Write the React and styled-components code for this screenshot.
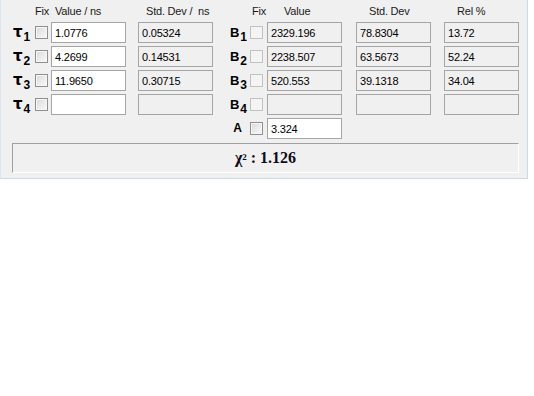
import React from 'react';
import styled, { createGlobalStyle } from 'styled-components';

const GlobalStyle = createGlobalStyle`
  html, body {
    margin: 0;
    padding: 0;
    background: #ffffff;
  }
`;

const S = {
    Panel: styled.div`
    width: 528px;
    box-sizing: border-box;
    background: #f0f0f0;
    border-left: 1px solid #dde6ee;
    border-right: 1px solid #cfd9e2;
    border-bottom: 1px solid #cfd9e2;
    padding: 2px 0 5px 0;
    font-family: "Liberation Sans", Arial, sans-serif;
    font-size: 11px;
    color: #000000;
  `,
    Grid: styled.div`
    display: grid;
    padding-left: 12px;
    grid-template-columns: 22px 16px 75px 12px 75px 37px 17px 75px 14px 75px 13px 75px;
    grid-template-rows: 17px repeat(5, 21px);
    row-gap: 3px;
    align-items: center;
  `,
    Head: styled.div`
    grid-column: ${p => p.$col};
    align-self: end;
    padding-left: ${p => p.$pad || 0}px;
    line-height: 13px;
    margin-bottom: 1px;
    white-space: pre;
    letter-spacing: -0.2px;
    color: #1a1a1a;
  `,
    Tau: styled.div`
    grid-column: 1;
    font-family: "DejaVu Sans", sans-serif;
    font-weight: bold;
    font-size: 15px;
    line-height: 21px;
    white-space: nowrap;
  `,
    Letter: styled.div`
    grid-column: ${p => p.$col};
    justify-self: end;
    padding-right: ${p => p.$gap || 3}px;
    font-family: "Liberation Sans", Arial, sans-serif;
    font-weight: bold;
    font-size: ${p => p.$size || 13}px;
    line-height: 21px;
    white-space: nowrap;
  `,
    Sub: styled.span`
    font-family: "Liberation Sans", Arial, sans-serif;
    font-weight: bold;
    font-size: 12px;
    position: relative;
    top: 4px;
    margin-left: 1px;
  `,
    Check: styled.span`
    grid-column: ${p => p.$col};
    display: block;
    width: 13px;
    height: 13px;
    box-sizing: border-box;
    border: 1px solid ${p => (p.$disabled ? '#c2c2c2' : '#8f8f8f')};
    background: ${p => (p.$disabled
        ? '#f4f4f4'
        : 'linear-gradient(135deg, #d8d8d8 0%, #ececec 55%, #f8f8f8 100%)')};
    box-shadow: ${p => (p.$disabled ? 'none' : 'inset 0 0 0 1px #f6f6f6')};
  `,
    Field: styled.input`
    grid-column: ${p => p.$col};
    width: 75px;
    height: 21px;
    box-sizing: border-box;
    margin: 0;
    padding: 0 0 0 3px;
    border: 1px solid #a5a5a5;
    border-radius: 0;
    background: ${p => (p.readOnly ? '#f0f0f0' : '#ffffff')};
    font-family: "Liberation Sans", Arial, sans-serif;
    font-size: 11px;
    letter-spacing: -0.2px;
    color: #000000;
    outline: none;
  `,
    Chi: styled.div`
    margin: 4px 0 0 11px;
    width: 507px;
    height: 30px;
    box-sizing: border-box;
    border-top: 1px solid #a0a0a0;
    border-left: 1px solid #a0a0a0;
    border-right: 1px solid #ffffff;
    border-bottom: 1px solid #ffffff;
    display: flex;
    align-items: center;
    justify-content: center;
    font-family: "Liberation Serif", "Times New Roman", serif;
    font-weight: bold;
    font-size: 16px;
    color: #0c0c1a;
  `,
    Sup: styled.sup`
    font-size: 9px;
    position: relative;
    top: -1px;
  `
};

const tauRows = [
    { value: '1.0776', dev: '0.05324' },
    { value: '4.2699', dev: '0.14531' },
    { value: '11.9650', dev: '0.30715' },
    { value: '', dev: '' }
];

const bRows = [
    { value: '2329.196', dev: '78.8304', rel: '13.72' },
    { value: '2238.507', dev: '63.5673', rel: '52.24' },
    { value: '520.553', dev: '39.1318', rel: '34.04' },
    { value: '', dev: '', rel: '' }
];

const App = () => {
    return (
        <>
            <GlobalStyle />
            <S.Panel>
                <S.Grid>
                    <S.Head $col="2 / 3">Fix</S.Head>
                    <S.Head $col="3" $pad={4}>Value / ns</S.Head>
                    <S.Head $col="5" $pad={8}>{'Std. Dev /  ns'}</S.Head>
                    <S.Head $col="7" $pad={2}>Fix</S.Head>
                    <S.Head $col="8" $pad={17}>Value</S.Head>
                    <S.Head $col="10" $pad={13}>Std. Dev</S.Head>
                    <S.Head $col="12" $pad={13}>Rel %</S.Head>

                    {tauRows.map((r, i) => (
                        <React.Fragment key={i}>
                            <S.Tau style={{ gridRow: i + 2 }}>
                                τ<S.Sub>{i + 1}</S.Sub>
                            </S.Tau>
                            <S.Check $col="2" style={{ gridRow: i + 2 }} />
                            <S.Field $col="3" style={{ gridRow: i + 2 }} defaultValue={r.value} />
                            <S.Field $col="5" style={{ gridRow: i + 2 }} readOnly defaultValue={r.dev} />
                            <S.Letter $col="6" style={{ gridRow: i + 2 }}>
                                B<S.Sub>{i + 1}</S.Sub>
                            </S.Letter>
                            <S.Check $col="7" $disabled style={{ gridRow: i + 2 }} />
                            <S.Field $col="8" style={{ gridRow: i + 2 }} readOnly defaultValue={bRows[i].value} />
                            <S.Field $col="10" style={{ gridRow: i + 2 }} readOnly defaultValue={bRows[i].dev} />
                            <S.Field $col="12" style={{ gridRow: i + 2 }} readOnly defaultValue={bRows[i].rel} />
                        </React.Fragment>
                    ))}

                    <S.Letter $col="6" $size={12} $gap={8} style={{ gridRow: 6 }}>A</S.Letter>
                    <S.Check $col="7" style={{ gridRow: 6 }} />
                    <S.Field $col="8" style={{ gridRow: 6 }} defaultValue="3.324" />
                </S.Grid>
                <S.Chi>
                    χ<S.Sup>2</S.Sup>&nbsp;: 1.126
                </S.Chi>
            </S.Panel>
        </>
    );
};

export default App;
